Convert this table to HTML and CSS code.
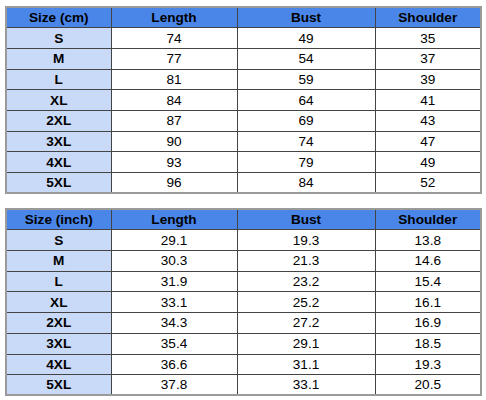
FILE: index.html
```html
<!DOCTYPE html>
<html>
<head>
<meta charset="utf-8">
<link rel="stylesheet" href="styles.css">
</head>
<body>
<div class="page">
<table class="size-table">
  <colgroup><col class="c1"><col class="c2"><col class="c3"><col class="c4"></colgroup>
  <thead><tr><th>Size (cm)</th><th>Length</th><th>Bust</th><th>Shoulder</th></tr></thead>
  <tbody>
    <tr><th>S</th><td>74</td><td>49</td><td>35</td></tr>
    <tr><th>M</th><td>77</td><td>54</td><td>37</td></tr>
    <tr><th>L</th><td>81</td><td>59</td><td>39</td></tr>
    <tr><th>XL</th><td>84</td><td>64</td><td>41</td></tr>
    <tr><th>2XL</th><td>87</td><td>69</td><td>43</td></tr>
    <tr><th>3XL</th><td>90</td><td>74</td><td>47</td></tr>
    <tr><th>4XL</th><td>93</td><td>79</td><td>49</td></tr>
    <tr><th>5XL</th><td>96</td><td>84</td><td>52</td></tr>
  </tbody>
</table>
<table class="size-table">
  <colgroup><col class="c1"><col class="c2"><col class="c3"><col class="c4"></colgroup>
  <thead><tr><th>Size (inch)</th><th>Length</th><th>Bust</th><th>Shoulder</th></tr></thead>
  <tbody>
    <tr><th>S</th><td>29.1</td><td>19.3</td><td>13.8</td></tr>
    <tr><th>M</th><td>30.3</td><td>21.3</td><td>14.6</td></tr>
    <tr><th>L</th><td>31.9</td><td>23.2</td><td>15.4</td></tr>
    <tr><th>XL</th><td>33.1</td><td>25.2</td><td>16.1</td></tr>
    <tr><th>2XL</th><td>34.3</td><td>27.2</td><td>16.9</td></tr>
    <tr><th>3XL</th><td>35.4</td><td>29.1</td><td>18.5</td></tr>
    <tr><th>4XL</th><td>36.6</td><td>31.1</td><td>19.3</td></tr>
    <tr><th>5XL</th><td>37.8</td><td>33.1</td><td>20.5</td></tr>
  </tbody>
</table>
</div>
</body>
</html>
```
FILE: styles.css
```css
html, body {
  margin: 0;
  padding: 0;
  background: #ffffff;
}
.page {
  padding: 6px 0 0 5px;
  display: flex;
  flex-direction: column;
  gap: 14px;
  font-family: "Liberation Sans", Arial, sans-serif;
  font-size: 13.6px;
  color: #000;
}
.size-table {
  border-collapse: collapse;
  table-layout: fixed;
  width: 475px;
  border: 2px solid #9a9a9a;
}
.c1 { width: 105px; }
.c2 { width: 126px; }
.c3 { width: 138px; }
.c4 { width: 106px; }
.size-table th,
.size-table td {
  height: 20.7px;
  padding: 0;
  text-align: center;
  vertical-align: middle;
  border: 1px solid #444;
  line-height: 15px;
  box-sizing: border-box;
}
.size-table thead th {
  background: #4a86e8;
  font-weight: bold;
}
.size-table tbody th {
  background: #c9daf8;
  font-weight: bold;
}
.size-table td {
  background: #ffffff;
  font-weight: normal;
}
```
